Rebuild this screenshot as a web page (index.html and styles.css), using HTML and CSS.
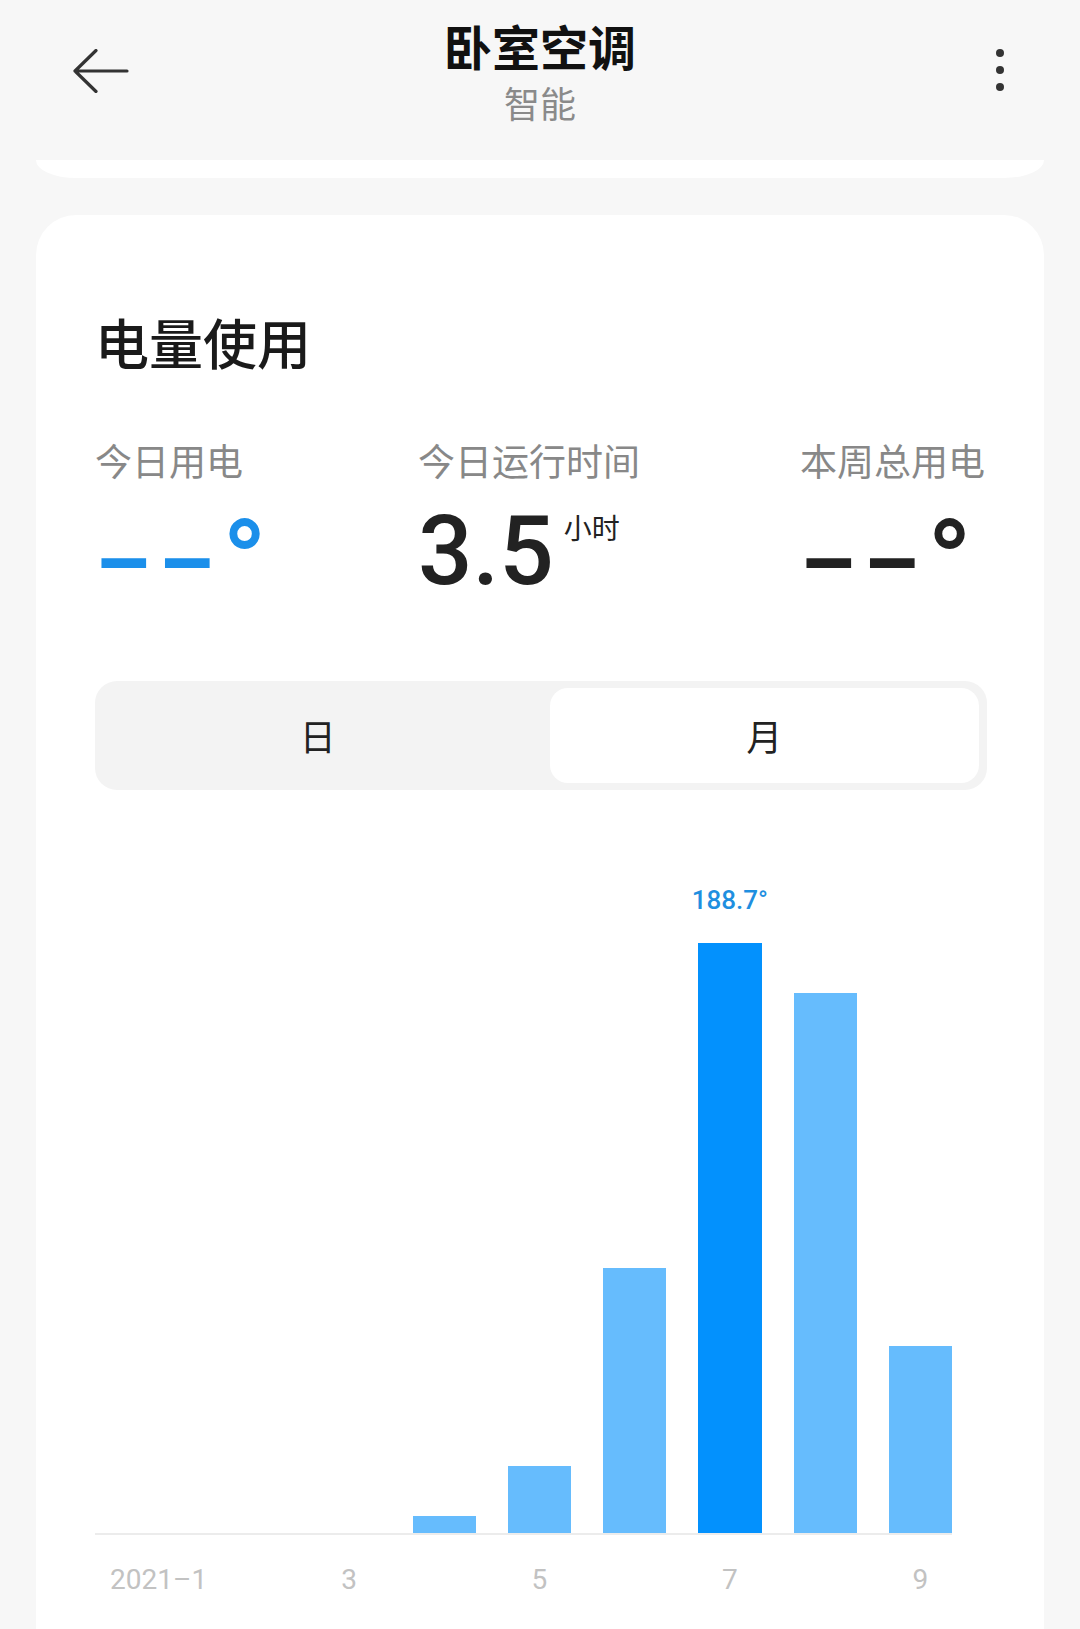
FILE: index.html
```html
<!DOCTYPE html>
<html lang="zh-CN">
<head>
    <meta charset="UTF-8">
    <meta name="viewport" content="width=device-width, initial-scale=1.0">
    <title>卧室空调</title>
    <link rel="stylesheet" href="styles.css">
</head>
<body>

<div class="header">
    <button class="icon-btn back">
        <svg width="56" height="44" viewBox="0 0 56 44">
            <path d="M23 1.5 L2 22 L23 42.5 M2 22 H54" stroke="#333" stroke-width="3.2" fill="none" stroke-linecap="round" stroke-linejoin="round"/>
        </svg>
    </button>
    <div class="title-block">
        <div class="title">卧室空调</div>
        <div class="subtitle">智能</div>
    </div>
    <button class="icon-btn more">
        <svg width="12" height="44" viewBox="0 0 12 44">
            <circle cx="6" cy="4" r="4" fill="#333"/>
            <circle cx="6" cy="21" r="4" fill="#333"/>
            <circle cx="6" cy="38" r="4" fill="#333"/>
        </svg>
    </button>
</div>

<div class="prev-card"></div>

<div class="card">
    <h2 class="card-title">电量使用</h2>

    <div class="stats">
        <div class="stat">
            <div class="stat-label">今日用电</div>
            <div class="stat-value blue"><span class="num dashes">––</span><span class="num deg">°</span></div>
        </div>
        <div class="stat">
            <div class="stat-label">今日运行时间</div>
            <div class="stat-value"><span class="num">3.5</span><span class="unit">小时</span></div>
        </div>
        <div class="stat">
            <div class="stat-label">本周总用电</div>
            <div class="stat-value"><span class="num dashes">––</span><span class="num deg">°</span></div>
        </div>
    </div>

    <div class="segmented">
        <div class="segment">日</div>
        <div class="segment active">月</div>
    </div>

    <div class="chart">
        <div class="bars">
            <div class="col"></div>
            <div class="col"></div>
            <div class="col"></div>
            <div class="col"><div class="bar" style="height: 17px"></div></div>
            <div class="col"><div class="bar" style="height: 67px"></div></div>
            <div class="col"><div class="bar" style="height: 265px"></div></div>
            <div class="col">
                <div class="peak">188.7°</div>
                <div class="bar active" style="height: 590px"></div>
            </div>
            <div class="col"><div class="bar" style="height: 540px"></div></div>
            <div class="col"><div class="bar" style="height: 187px"></div></div>
        </div>
        <div class="labels">
            <div class="lbl">2021–1</div>
            <div class="lbl"></div>
            <div class="lbl">3</div>
            <div class="lbl"></div>
            <div class="lbl">5</div>
            <div class="lbl"></div>
            <div class="lbl">7</div>
            <div class="lbl"></div>
            <div class="lbl">9</div>
        </div>
    </div>
</div>

</body>
</html>
```

FILE: styles.css
```css
body {
    margin: 0;
    padding: 0;
    width: 1080px;
    height: 1629px;
    overflow: hidden;
    background-color: #f7f7f7;
    font-family: "Noto Sans CJK SC", "Noto Sans", sans-serif;
    color: #222;
}

.header {
    height: 160px;
    box-sizing: border-box;
    padding-top: 19px;
    display: grid;
    grid-template-columns: 1fr auto 1fr;
    align-items: start;
}

.icon-btn {
    border: none;
    background: none;
    padding: 0;
    margin-top: 30px;
    display: block;
    cursor: pointer;
}

.back {
    justify-self: start;
    margin-left: 73px;
}

.more {
    justify-self: end;
    margin-right: 74px;
}

.title-block {
    text-align: center;
}

.title {
    font-size: 48px;
    line-height: 52px;
    font-weight: 700;
    color: #111;
}

.subtitle {
    margin-top: 11px;
    font-size: 36px;
    line-height: 40px;
    color: #8a8a8a;
}

.prev-card {
    margin: 0 36px;
    height: 18px;
    background: #fff;
    border-radius: 0 0 40px 40px / 0 0 18px 18px;
}

.card {
    margin: 37px 36px 0;
    min-height: 1500px;
    padding: 96px 57px 0 59px;
    background: #fff;
    border-radius: 40px;
}

.card-title {
    margin: 0;
    font-size: 54px;
    line-height: 62px;
    font-weight: 500;
    color: #1a1a1a;
}

.stats {
    margin-top: 65px;
    display: grid;
    grid-template-columns: 323px 382px auto;
}

.stat-label {
    font-size: 37px;
    line-height: 44px;
    color: #888;
}

.stat-value {
    margin-top: 14px;
    height: 110px;
    display: flex;
    align-items: flex-start;
    color: #222;
}

.stat-value.blue {
    color: #1b8fea;
}

.num {
    font-family: Roboto, sans-serif;
    font-size: 96px;
    line-height: 110px;
    font-weight: 500;
}

.dashes {
    font-size: 88px;
    font-weight: 700;
    letter-spacing: 8px;
    margin-top: 13px;
}

.deg {
    font-size: 118px;
    margin-top: 13px;
}

.unit {
    margin-top: 17px;
    margin-left: 10px;
    font-size: 28px;
    line-height: 1;
    color: #222;
}

.segmented {
    margin-top: 75px;
    height: 109px;
    box-sizing: border-box;
    padding: 7px 8px;
    display: flex;
    gap: 17px;
    background: #f3f3f3;
    border-radius: 22px;
}

.segment {
    flex: 1;
    text-align: center;
    font-size: 36px;
    line-height: 95px;
    border-radius: 18px;
    color: #222;
}

.segment.active {
    background: #fff;
}

.chart {
    margin-top: 30px;
    margin-right: 35px;
}

.bars {
    height: 713px;
    display: flex;
    align-items: stretch;
    gap: 32px;
    padding-left: 32px;
    border-bottom: 2px solid #ececec;
}

.col {
    flex: 1;
    min-width: 0;
    display: flex;
    flex-direction: column;
    align-items: center;
    justify-content: flex-end;
}

.bar {
    width: 100%;
    background: #66bcfd;
}

.bar.active {
    background: #0391fd;
}

.peak {
    margin-bottom: 28px;
    font-family: Roboto, sans-serif;
    font-size: 26px;
    line-height: 30px;
    font-weight: 500;
    color: #1f8fe0;
    white-space: nowrap;
}

.labels {
    margin-top: 28px;
    display: flex;
    gap: 32px;
    padding-left: 32px;
}

.lbl {
    flex: 1;
    min-width: 0;
    display: flex;
    justify-content: center;
    white-space: nowrap;
    font-family: Roboto, sans-serif;
    font-size: 28px;
    line-height: 34px;
    color: #c2c2c2;
}
```
